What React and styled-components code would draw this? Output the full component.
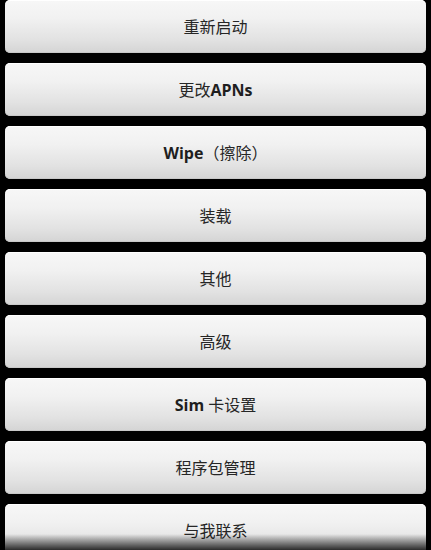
import React from "react";
import styled, { createGlobalStyle } from "styled-components";

const GlobalStyle = createGlobalStyle`
  html, body {
    margin: 0;
    padding: 0;
    background: #000;
    height: 100%;
    overflow: hidden;
  }
`;

const items = [
  { text: "重新启动" },
  { text: "更改", latin: "APNs", after: true },
  { latin: "Wipe", text: "（擦除）" },
  { text: "装载" },
  { text: "其他" },
  { text: "高级" },
  { latin: "Sim", text: " 卡设置" },
  { text: "程序包管理" },
  { text: "与我联系" },
];

const App = () => {
  return (
    <Screen>
      <GlobalStyle />
      <Menu>
        {items.map((item, i) => (
          <MenuButton key={i} type="button">
            <Label>
              {item.after ? (
                <>
                  {item.text}
                  <Latin>{item.latin}</Latin>
                </>
              ) : (
                <>
                  {item.latin && <Latin>{item.latin}</Latin>}
                  {item.text}
                </>
              )}
            </Label>
          </MenuButton>
        ))}
      </Menu>
      <BottomFade />
    </Screen>
  );
};

export default App;

const Screen = styled.div`
  position: relative;
  width: 431px;
  height: 550px;
  overflow: hidden;
  background: #000;
`;

const Menu = styled.div`
  display: flex;
  flex-direction: column;
  gap: 10px;
  padding: 0 5px;
`;

const MenuButton = styled.button`
  flex: none;
  height: 53px;
  width: 100%;
  border: none;
  border-radius: 5px;
  background: linear-gradient(#f7f7f7 0%, #f1f1f1 35%, #e2e2e2 75%, #d4d4d4 100%);
  box-shadow: inset 0 1px 0 #fff, inset 0 -1px 0 #c8c8c8;
  color: #262626;
  font-family: "Noto Sans", "Noto Sans CJK SC", sans-serif;
  font-size: 16px;
  font-weight: 400;
  display: flex;
  align-items: center;
  justify-content: center;
  padding: 0 0 2px;
`;

const Label = styled.span`
  white-space: pre;
`;

const Latin = styled.span`
  font-family: "Open Sans", "Noto Sans", sans-serif;
  font-weight: 700;
  color: #1e1e1e;
`;

const BottomFade = styled.div`
  position: absolute;
  left: 0;
  right: 0;
  bottom: 0;
  height: 16px;
  background: linear-gradient(rgba(0, 0, 0, 0), rgba(0, 0, 0, 0.8));
  pointer-events: none;
`;
